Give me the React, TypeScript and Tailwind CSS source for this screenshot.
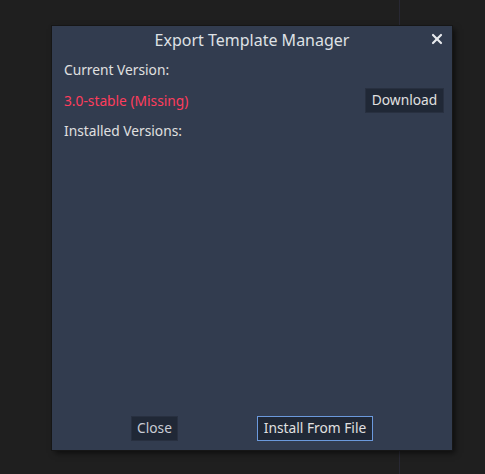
import { X } from 'lucide-react'

export default function App() {
  return (
    <div
      className="relative h-[474px] w-[485px] overflow-hidden bg-[#1f1f1f] text-[13.75px] text-[#e0e0e0]"
      style={{ fontFamily: '"Noto Sans", "DejaVu Sans", sans-serif' }}
    >
      {/* editor background */}
      <div className="flex h-full">
        <div className="h-full w-[400px] border-r border-[#282833]" />
        <div className="flex-1" />
      </div>

      {/* dialog */}
      <div className="absolute left-[52px] top-[26px] flex h-[424px] w-[400px] flex-col bg-[#323c4f] shadow-[0_0_0_1px_#161616,3px_3px_6px_rgba(0,0,0,0.6)]">
        <div className="relative flex h-[26px] items-center justify-center text-[16px] leading-none text-[#dfe1e5]">
          <span className="mt-[1px]">Export Template Manager</span>
          <button className="absolute right-[7px] top-[5px] text-[#e8eaee]">
            <X size={16} strokeWidth={3.2} />
          </button>
        </div>

        <div className="flex flex-1 flex-col px-[12px] pt-[9px]">
          <div className="h-[18px] leading-[18px]">Current Version:</div>
          <div className="mt-[9px] flex items-center justify-between">
            <span className="text-[#ff3d5d]">3.0-stable (Missing)</span>
            <button className="mb-[2px] mr-[-4px] h-[25px] w-[79px] border border-[#283040] bg-[#202836] text-[#e0e0e0]">
              Download
            </button>
          </div>
          <div className="mt-[7px] h-[18px] leading-[18px]">Installed Versions:</div>
        </div>

        <div className="flex justify-evenly pb-[9px]">
          <button className="h-[25px] w-[47px] border border-[#283040] bg-[#202836] text-[#c8ccd4]">
            Close
          </button>
          <button className="h-[25px] w-[116px] border border-[#6b99dc] bg-[#202836] text-[#e0e0e0]">
            Install From File
          </button>
        </div>
      </div>
    </div>
  )
}
